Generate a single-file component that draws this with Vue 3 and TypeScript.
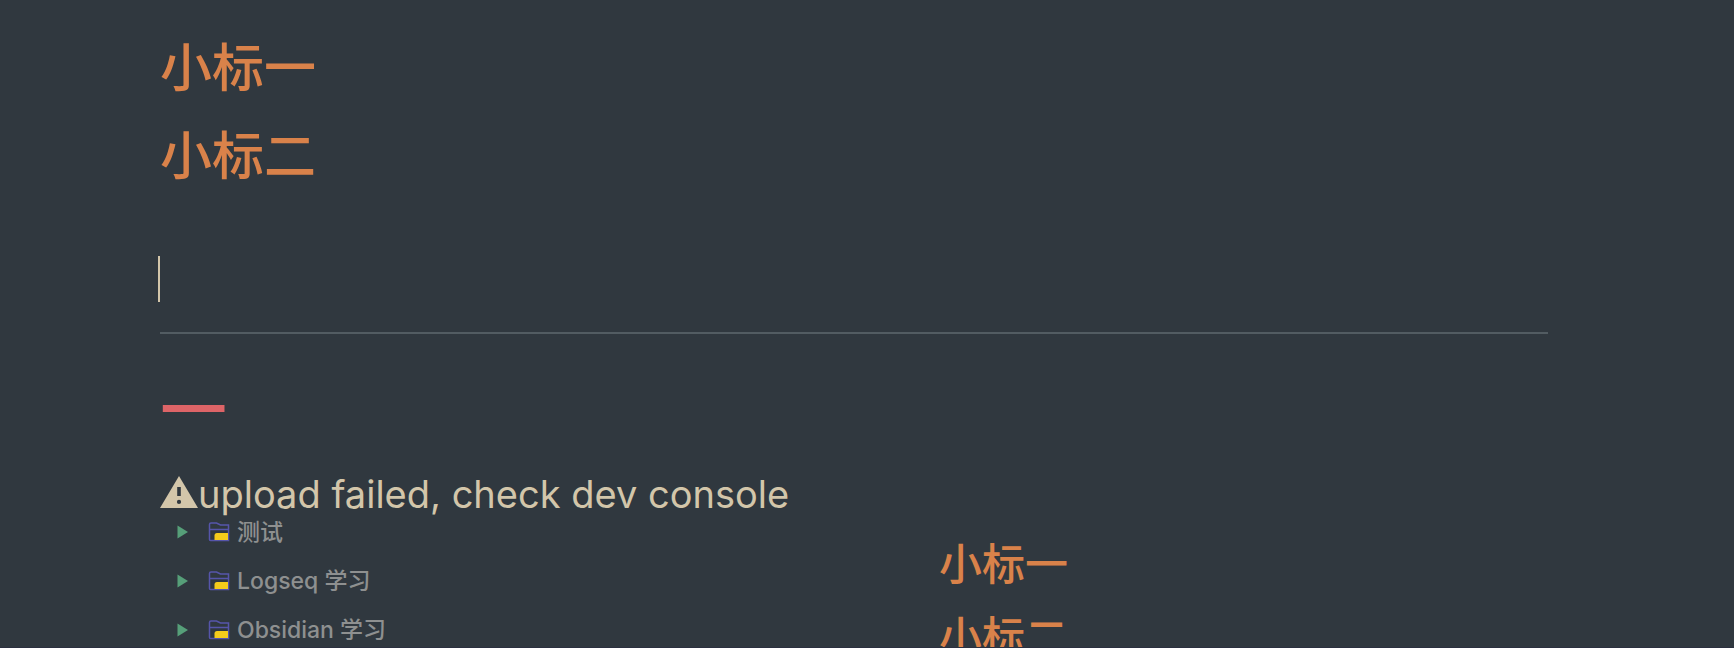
<script setup lang="ts">
interface TreeItem {
  name: string
}

const headings: string[] = ['小标一', '小标二']
const tree: TreeItem[] = [
  { name: '测试' },
  { name: 'Logseq 学习' },
  { name: 'Obsidian 学习' },
]
</script>

<template>
  <main class="editor">
    <h2 v-for="heading in headings" :key="heading" class="heading">{{ heading }}</h2>
    <div class="cursor-line"><span class="caret"></span></div>
    <hr class="rule" />
    <h1 class="title">一</h1>
    <p class="warning">
      <svg class="warning-icon" viewBox="0 0 38 32" role="img" aria-label="Warning">
        <path
          fill-rule="evenodd"
          d="M19 0 38 32H0ZM17.2 11V20H20.8V11ZM19 23.8a2.1 2.1 0 1 0 0 4.2a2.1 2.1 0 1 0 0-4.2Z"
        />
      </svg>
      <span>upload failed, check dev console</span>
    </p>
    <section class="preview">
      <ul class="tree">
        <li v-for="item in tree" :key="item.name" class="tree-row">
          <svg class="arrow" viewBox="0 0 12 14" aria-hidden="true">
            <path d="M1.5 .5 12 7 1.5 13.5Z" />
          </svg>
          <svg class="folder" viewBox="0 0 22 20" aria-hidden="true">
            <path class="folder-line" d="M3 1H8.5L12.5 3H20.5V18.5H2.5Q1.5 18.5 1.5 17.5V2.5Q1.5 1 3 1ZM1.5 7.5H20.5" />
            <path class="folder-fill" d="M9 11H20V18H6.5V13.5Q6.5 11 9 11Z" />
          </svg>
          <span>{{ item.name }}</span>
        </li>
      </ul>
      <div class="outline">
        <h3 v-for="heading in headings" :key="heading" class="small-heading">{{ heading }}</h3>
      </div>
    </section>
  </main>
</template>

<style>
html,
body {
  height: 100%;
  overflow: hidden;
  background: #30383f;
}

#app {
  height: 100%;
}
</style>

<style scoped>
.editor {
  box-sizing: border-box;
  height: 100%;
  display: flex;
  flex-direction: column;
  overflow: hidden;
  padding: 25px 186px 0 160px;
  border-bottom: 1px solid #2b3040;
  background: #30383f;
  color: #d3c6aa;
  font-family: Inter, "Noto Sans CJK SC", sans-serif;
}

.editor > * {
  flex-shrink: 0;
}

.heading,
.small-heading,
.title,
.warning,
.tree {
  margin: 0;
  padding: 0;
}

.heading {
  color: #d9824a;
  font-size: 52px;
  font-weight: 500;
  line-height: 88px;
}

.cursor-line {
  display: flex;
  margin: 55px 0 30px -2px;
}

.caret {
  width: 2px;
  height: 46px;
  background: #d3c6aa;
}

.rule {
  width: 100%;
  height: 2px;
  margin: 0;
  border: 0;
  background: #525c62;
}

.title {
  margin-top: 33px;
  color: #dd6467;
  font-size: 67px;
  font-weight: 500;
  line-height: 88px;
}

.warning {
  display: flex;
  align-items: flex-start;
  margin-top: 14px;
  font-size: 38px;
  line-height: 50px;
}

.warning-icon {
  width: 38px;
  height: 32px;
  margin-top: 7px;
  fill: #d3c6aa;
}

.preview {
  display: grid;
  grid-template-columns: 779px 1fr;
  margin-top: 1px;
  overflow: hidden;
}

.tree {
  list-style: none;
  padding-left: 16px;
  margin-top: -13px;
}

.tree-row {
  display: flex;
  align-items: center;
  height: 49px;
  color: #8e9090;
  font-size: 23px;
  font-weight: 500;
  line-height: 32px;
}

.arrow {
  width: 12px;
  height: 14px;
  margin-right: 20px;
  fill: #569f79;
}

.folder {
  width: 22px;
  height: 20px;
  margin-right: 7px;
}

.folder-line {
  fill: none;
  stroke: #5655aa;
  stroke-width: 1.5;
}

.folder-fill {
  fill: #f5cc1b;
}

.outline {
  padding-top: 8px;
}

.small-heading {
  color: #d9824a;
  font-size: 43px;
  font-weight: 500;
  line-height: 73px;
}
</style>
